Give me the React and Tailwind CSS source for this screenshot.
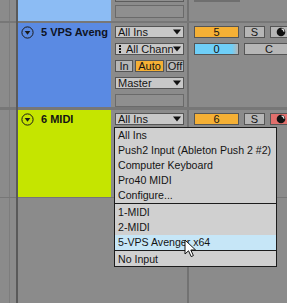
import clsx from "clsx";

const Arrow = () => (
  <svg width="8" height="6" viewBox="0 0 8 6" className="shrink-0">
    <path d="M0 0.5 L8 0.5 L4 5.5 Z" fill="#111" />
  </svg>
);

const Dropdown = ({ label, icon, className }) => (
  <div
    className={clsx(
      "h-[12px] bg-[#c8c8c8] border border-[#555] flex items-center pl-[2px] pr-[2px] overflow-hidden",
      className
    )}
  >
    {icon}
    <span className="flex-1 whitespace-nowrap overflow-hidden leading-none">{label}</span>
    <Arrow />
  </div>
);

const Box = ({ children, className }) => (
  <div
    className={clsx(
      "border border-[#555] flex items-center justify-center leading-none overflow-hidden",
      className
    )}
  >
    {children}
  </div>
);

const ArmIcon = () => (
  <svg width="10" height="10" viewBox="0 0 10 10">
    <circle cx="5" cy="5" r="4.3" fill="#111" />
    <path d="M5.6 1.9 A3 3 0 0 1 8 4.6" stroke="#e0e0e0" strokeWidth="1.3" fill="none" />
  </svg>
);

const FoldIcon = () => (
  <svg width="13" height="13" viewBox="0 0 13 13" className="shrink-0">
    <circle cx="6.5" cy="6.5" r="5.6" stroke="#1a1a1a" strokeWidth="1" fill="none" />
    <path d="M3.7 5 L9.3 5 L6.5 8.8 Z" fill="#1a1a1a" />
  </svg>
);

const ChanIcon = () => (
  <div className="flex flex-col gap-[1px] mr-[5px] ml-[1px] shrink-0">
    <div className="w-[2px] h-[2px] bg-[#111]" />
    <div className="w-[2px] h-[2px] bg-[#111]" />
    <div className="w-[2px] h-[2px] bg-[#111]" />
  </div>
);

// left edge strip + header + controls + right side
const Row = ({ h, header, controls, right }) => (
  <div className={clsx("flex shrink-0", h)}>
    <div className="w-[9px] shrink-0" />
    <div className="w-[1px] shrink-0 bg-[#7d7d7d]" />
    <div className="w-[6px] shrink-0" />
    <div className="w-[2px] shrink-0 bg-[#5a5a5a]" />
    <div className="w-[93px] shrink-0 flex flex-col">{header}</div>
    <div className="w-[3px] shrink-0" />
    <div className="w-[72px] shrink-0 pl-[1px] pr-[2px] flex flex-col">{controls}</div>
    <div className="w-[1px] shrink-0" />
    <div className="w-[2px] shrink-0 bg-[#727272]" />
    <div className="w-[3px] shrink-0" />
    <div className="flex-1 flex flex-col pl-[2px]">{right}</div>
  </div>
);

const Sep = ({ h }) => (
  <div className={clsx("flex shrink-0 bg-[#777]", h)}>
    <div className="w-[16px]" />
    <div className="w-[2px] bg-[#5a5a5a]" />
  </div>
);

const menuTop = ["All Ins", "Push2 Input (Ableton Push 2 #2)", "Computer Keyboard", "Pro40 MIDI", "Configure..."];
const menuTracks = ["1-MIDI", "2-MIDI", "5-VPS Avenger x64"];

const App = () => {
  return (
    <div className="w-[287px] h-[303px] bg-[#8b8b8b] relative overflow-hidden flex flex-col font-['Liberation_Sans',Arial,sans-serif] text-[11px] text-[#141414]">
      {/* track above, mostly scrolled out */}
      <Row
        h="h-[21px]"
        header={<div className="flex-1 bg-[#8cbcf4]" />}
        controls={
          <>
            <div className="h-[2px] border-b border-x border-[#5c5c5c] bg-[#8f8f8f]" />
            <div className="h-[13px] mt-[3px] border border-[#6a6a6a] bg-[#8f8f8f]" />
          </>
        }
        right={<div className="h-[2px] w-[46px] bg-[#6f6f6f]" />}
      />
      <Sep h="h-[2px]" />

      {/* 5 VPS Aveng */}
      <Row
        h="h-[84px]"
        header={
          <div className="flex-1 bg-[#5a8ae3] flex items-start pl-[3px] pt-[3px] gap-[7px]">
            <FoldIcon />
            <span className="font-bold leading-[13px] text-[#0f1424]">5 VPS Aveng</span>
          </div>
        }
        controls={
          <div className="flex flex-col gap-[5px] pt-[3px]">
            <Dropdown label="All Ins" className="h-[12px]" />
            <Dropdown label="All Channe" icon={<ChanIcon />} className="h-[12px]" />
            <div className="flex gap-[2px] h-[12px]">
              <Box className="w-[18px] bg-[#b6b6b6]">In</Box>
              <Box className="w-[29px] bg-[#f5b035]">Auto</Box>
              <Box className="flex-1 bg-[#b6b6b6]">Off</Box>
            </div>
            <Dropdown label="Master" className="h-[12px]" />
            <div className="h-[13px] border border-[#6a6a6a] bg-[#8f8f8f]" />
          </div>
        }
        right={
          <div className="flex flex-col gap-[5px] pt-[3px]">
            <div className="flex gap-[5px] h-[12px]">
              <Box className="w-[45px] bg-[#f5b035]">5</Box>
              <Box className="w-[21px] bg-[#b6b6b6]">S</Box>
              <Box className="w-[24px] bg-[#b6b6b6] pr-[2px]">
                <ArmIcon />
              </Box>
            </div>
            <div className="flex gap-[5px] h-[12px]">
              <Box className="w-[45px] bg-[linear-gradient(to_right,#6fcff8_0%,#6fcff8_86%,#b6b6b6_100%)]">0</Box>
              <Box className="w-[50px] bg-[#b6b6b6]">C</Box>
            </div>
          </div>
        }
      />
      <Sep h="h-[3px]" />

      {/* 6 MIDI */}
      <Row
        h="h-[87px]"
        header={
          <div className="flex-1 bg-[#c5e500] flex items-start pl-[3px] pt-[3px] gap-[7px]">
            <FoldIcon />
            <span className="font-bold leading-[13px] text-[#141414]">6 MIDI</span>
          </div>
        }
        controls={
          <div className="pt-[3px]">
            <Dropdown label="All Ins" className="h-[12px]" />
          </div>
        }
        right={
          <div className="flex gap-[5px] h-[12px] mt-[3px]">
            <Box className="w-[45px] bg-[#f5b035]">6</Box>
            <Box className="w-[21px] bg-[#b6b6b6]">S</Box>
            <Box className="w-[24px] bg-[#e06f6c] pr-[2px]">
              <ArmIcon />
            </Box>
          </div>
        }
      />
      <Sep h="h-[1px]" />
      <Row h="flex-1" header={null} controls={null} right={null} />

      {/* input chooser menu */}
      <div className="absolute left-[114px] top-[127px] w-[163px] bg-[#d0d0d0] border border-[#1c1c1c] flex flex-col leading-none text-[10.6px]">
        {menuTop.map((item) => (
          <div key={item} className="h-[15px] flex items-center pl-[3px] whitespace-nowrap">
            {item}
          </div>
        ))}
        <div className="h-[1px] bg-[#1c1c1c] mb-[1px]" />
        {menuTracks.map((item) => (
          <div
            key={item}
            className={clsx(
              "h-[15px] flex items-center pl-[3px] whitespace-nowrap",
              item === "5-VPS Avenger x64" && "bg-[#c6e6f7]"
            )}
          >
            {item}
          </div>
        ))}
        <div className="h-[1px] bg-[#1c1c1c] mb-[1px]" />
        <div className="h-[14px] flex items-center pl-[3px]">No Input</div>
      </div>

      {/* mouse pointer */}
      <svg
        width="13"
        height="19"
        viewBox="0 0 13 19"
        className="absolute left-[184px] top-[239px]"
      >
        <path
          d="M1 1 L1 15 L4.5 11.8 L7.2 17.6 L9.4 16.6 L6.8 11 L11.6 11 Z"
          fill="#fff"
          stroke="#111"
          strokeWidth="1"
          strokeLinejoin="round"
        />
      </svg>
    </div>
  );
};

export default App;
